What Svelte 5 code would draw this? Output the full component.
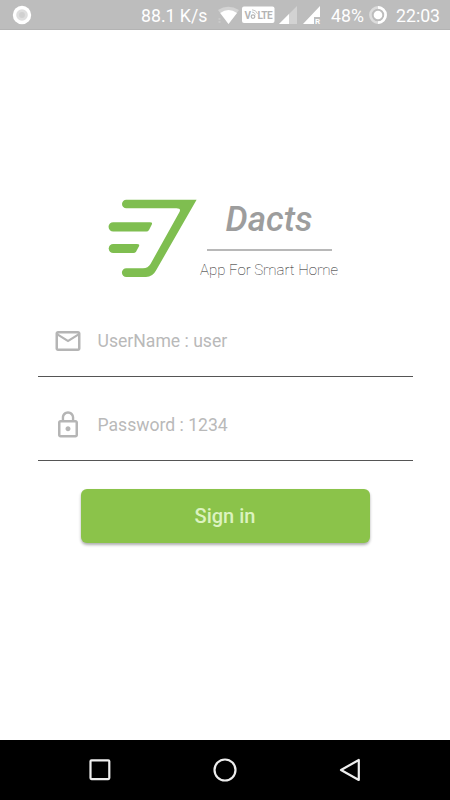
<script>
  const fields = [
    { kind: 'mail', hint: 'UserName : user' },
    { kind: 'lock', hint: 'Password : 1234' }
  ];
</script>

<div class="screen">
  <header>
    <svg class="record" width="20" height="20" viewBox="0 0 20 20">
      <circle cx="10" cy="10" r="9.2" fill="#fff" />
      <circle cx="10" cy="10" r="5.8" fill="#dedede" />
      <circle cx="10" cy="10" r="2.9" fill="#d0d0d0" />
    </svg>
    <span class="speed">88.1 K/s</span>
    <svg class="signals" width="104" height="20" viewBox="0 0 104 20">
      <path d="M1 5 Q11 -1.5 22 5 L11.5 19 Z" fill="#d3d3d3" />
      <path d="M3.2 8 Q11.5 2.2 20 8 L11.5 19 Z" fill="#fff" />
      <path d="M1.5 14h2M1.5 17h2" stroke="#d4d4d4" />
      <rect x="25" y="1.5" width="32.5" height="16.5" rx="2" fill="#fff" />
      <text x="27.5" y="13.5" class="volte">V</text>
      <circle cx="36" cy="11.6" r="1.8" fill="none" stroke="#b4b4b4" stroke-width="1.2" />
      <path d="M35 7q2.5 0 3.5 2.5M35 4.8q4.2 0 5.5 4" fill="none" stroke="#bdbdbd" stroke-width=".9" />
      <text x="40.5" y="13.5" class="volte" textLength="15">LTE</text>
      <path d="M62 19 L80 1 V19 Z" fill="#d2d2d2" />
      <path d="M62 19 L72 9 V19 Z" fill="#fff" />
      <path d="M86 19 L103 1 V12 H97 V19 Z" fill="#fff" />
      <text x="98" y="19" class="roam">R</text>
    </svg>
    <span class="percent">48%</span>
    <svg class="battery" width="20" height="20" viewBox="0 0 20 20">
      <circle cx="10" cy="10" r="7.6" fill="none" stroke="#dcdcdc" stroke-width="2.6" />
      <path d="M10 2.4 A7.6 7.6 0 0 1 10 17.6" fill="none" stroke="#fff" stroke-width="2.6" />
      <circle cx="10" cy="10" r="4.3" fill="#fff" />
    </svg>
    <span class="clock">22:03</span>
  </header>

  <main>
    <section class="brand">
      <svg class="logo" width="90" height="80" viewBox="0 0 90 80" fill="#7fbe50">
        <path d="M18.3 .7 H88.6 L48 71.5 Q44.5 78 38 78 H18.3 A4.4 4.4 0 0 1 18.3 69.2 H35 Q40 69.2 42.5 65 L71.2 13.5 Q73.7 9.3 68.5 9.3 H18.3 A4.3 4.3 0 0 1 18.3 .7Z" />
        <path d="M5.2 23.2 H42 Q45 23.2 43.8 25.5 L41 31 Q40 32.5 38.5 32.5 H5.2 A4.6 4.6 0 0 1 5.2 23.2Z" />
        <path d="M5.2 45 H29 Q32 45 31 47.2 L28 52.8 Q27 54 25.5 54 H5.2 A4.5 4.5 0 0 1 5.2 45Z" />
      </svg>
      <div class="title">
        <h1>Dacts</h1>
        <hr />
        <p>App For Smart Home</p>
      </div>
    </section>

    <form>
      {#each fields as field}
        <div class="field">
          <svg width="30" height="30" viewBox="0 0 24 24" fill="#b5b5b5">
            {#if field.kind === 'mail'}
              <path d="M20 4H4c-1.1 0-2 .9-2 2v12c0 1.1.9 2 2 2h16c1.1 0 2-.9 2-2V6c0-1.1-.9-2-2-2zm0 14H4V8l8 5 8-5v10zm-8-7L4 6h16l-8 5z" />
            {:else}
              <path d="M12 17c1.1 0 2-.9 2-2s-.9-2-2-2-2 .9-2 2 .9 2 2 2zm6-9h-1V6c0-2.76-2.24-5-5-5S7 3.24 7 6v2H6c-1.1 0-2 .9-2 2v10c0 1.1.9 2 2 2h12c1.1 0 2-.9 2-2V10c0-1.1-.9-2-2-2zM8.9 6c0-1.71 1.39-3.1 3.1-3.1s3.1 1.39 3.1 3.1v2H8.9V6zM18 20H6V10h12v10z" />
            {/if}
          </svg>
          <span>{field.hint}</span>
        </div>
      {/each}
      <button type="button">Sign in</button>
    </form>
  </main>

  <nav>
    <svg width="24" height="24" viewBox="0 0 24 24"><rect x="2.5" y="2.3" width="18.8" height="18.8" rx="1" /></svg>
    <svg width="24" height="24" viewBox="0 0 24 24"><circle cx="12" cy="12" r="10.5" /></svg>
    <svg width="24" height="24" viewBox="0 0 24 24"><path d="M3 12 L20.8 2 V22 Z" /></svg>
  </nav>
</div>

<style>
  .screen {
    width: 450px;
    height: 800px;
    display: flex;
    flex-direction: column;
    background: #fff;
    font-family: Roboto, sans-serif;
    overflow: hidden;
  }
  header {
    height: 30px;
    box-sizing: border-box;
    display: flex;
    align-items: center;
    background: #bdbdbd;
    border-bottom: 1px solid #b3b3b3;
    color: #fff;
    font-size: 17.7px;
    line-height: 30px;
    white-space: nowrap;
    padding-top: 2px;
  }
  .record { margin: -1px 0 0 12px; }
  .speed { margin-left: 109px; width: 76px; }
  .signals { width: 104px; margin-top: -1px; flex: none; }
  .volte { font: bold 10px Roboto, sans-serif; fill: #b4b4b4; }
  .roam { font: bold 8px Roboto, sans-serif; fill: #fff; }
  .percent { margin-left: 10px; width: 37px; }
  .battery { flex: none; margin-top: -1px; }
  .clock { margin-left: 8px; }
  main { flex: 1; padding: 168px 37.5px 0 37.5px; }
  .brand { display: flex; height: 95px; padding-left: 70.5px; }
  .logo { margin-top: 1px; flex: none; }
  .title { margin: 1px 0 0 1.5px; width: 139px; display: flex; flex-direction: column; align-items: center; }
  h1 {
    margin: 0;
    font-size: 35px;
    line-height: 42px;
    font-weight: 500;
    font-style: italic;
    color: #9d9d9d;
  }
  hr { width: 125px; height: 2px; border: 0; margin: 8px 0 0; background: #b8b8b8; }
  p { margin: 9px 0 0; font-size: 15px; line-height: 20px; font-weight: 100; color: #222; white-space: nowrap; }
  form { display: flex; flex-direction: column; }
  .field {
    height: 84px;
    box-sizing: border-box;
    display: flex;
    align-items: center;
    gap: 15px;
    padding: 13px 0 0 15px;
    border-bottom: 1px solid #555;
    color: #b9b9b9;
    font-size: 17.6px;
  }
  button {
    align-self: center;
    width: 289px;
    height: 54px;
    margin-top: 28px;
    border: 0;
    border-radius: 6px;
    background: #8bc34a;
    box-shadow: 0 2px 3px rgba(0, 0, 0, .32);
    color: #dcf3c0;
    font: 500 20px Roboto, sans-serif;
  }
  nav {
    height: 60px;
    background: #000;
    display: flex;
    justify-content: space-between;
    align-items: center;
    padding: 0 88px 0 88px;
  }
  nav svg { fill: none; stroke: #eee; stroke-width: 2.2; stroke-linejoin: round; }
</style>
